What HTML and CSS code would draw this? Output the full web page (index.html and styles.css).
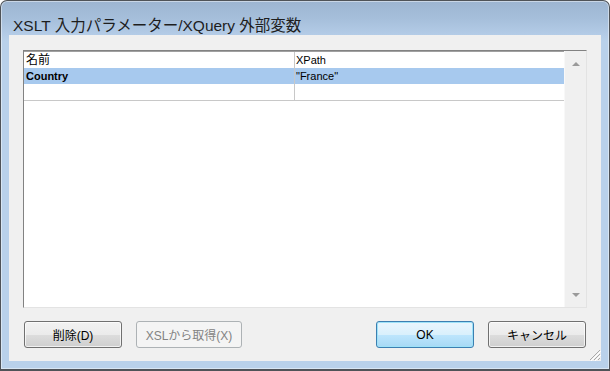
FILE: index.html
```html
<!DOCTYPE html>
<html lang="ja">
  <head>
    <meta charset="UTF-8" />
    <title>XSLT 入力パラメーター/XQuery 外部変数</title>
    <link rel="stylesheet" href="styles.css">
  </head>
  <body>
    <div class="window">
      <div class="title-bar">XSLT 入力パラメーター/XQuery 外部変数</div>
      <div class="client">
        <div class="list-box">
          <div class="grid">
            <div class="row header">
              <div class="cell name">名前</div>
              <div class="cell value">XPath</div>
            </div>
            <div class="row selected">
              <div class="cell name bold">Country</div>
              <div class="cell value">"France"</div>
            </div>
            <div class="row empty">
              <div class="cell name"></div>
              <div class="cell value"></div>
            </div>
          </div>
          <div class="scrollbar">
            <span class="arrow up"></span>
            <span class="arrow down"></span>
          </div>
        </div>
        <div class="buttons">
          <button class="btn btn-delete">削除(D)</button>
          <button class="btn btn-xsl" disabled>XSLから取得(X)</button>
          <div class="spacer"></div>
          <button class="btn btn-ok">OK</button>
          <button class="btn btn-cancel">キャンセル</button>
        </div>
        <svg class="grip" width="12" height="12" viewBox="0 0 12 12">
          <!-- resize grip -->
          <line x1="11" y1="1" x2="1" y2="11" stroke="#a8a8a8" />
          <line x1="12" y1="2" x2="2" y2="12" stroke="#ffffff" />
          <line x1="11" y1="5" x2="5" y2="11" stroke="#a8a8a8" />
          <line x1="12" y1="6" x2="6" y2="12" stroke="#ffffff" />
          <line x1="11" y1="9" x2="9" y2="11" stroke="#a8a8a8" />
        </svg>
      </div>
    </div>
  </body>
</html>
```

FILE: styles.css
```css
body {
  margin: 0;
  font-family: "Liberation Sans", "Noto Sans CJK JP", sans-serif;
  background-color: #ffffff;
}
.window {
  width: 610px;
  height: 371px;
  box-sizing: border-box;
  border: 1px solid #4f5358;
  border-bottom-width: 2px;
  border-radius: 7px 7px 0 0;
  background: linear-gradient(to bottom, #9db5d1 0, #a6bfdb 18px, #b4cce7 34px, #b9d1ea 40px, #b9d1ea 100%);
  box-shadow: inset 0 0 0 1px rgba(255, 255, 255, 0.45);
  padding: 0 8px 8px 8px;
  display: flex;
  flex-direction: column;
}
.title-bar {
  height: 35px;
  box-sizing: border-box;
  padding: 12px 0 0 4px;
  font-size: 15.5px;
  color: #1e1e1e;
  white-space: nowrap;
}
.client {
  position: relative;
  flex: 1;
  background-color: #f0f0f0;
  padding: 15px 14px 13px 14px;
  display: flex;
  flex-direction: column;
}
.list-box {
  height: 258px;
  box-sizing: border-box;
  background: white;
  border: 1px solid;
  border-color: #828282 #e3e3e3 #e3e3e3 #828282;
  box-shadow: inset 0 1px 0 #a0a0a0;
  display: flex;
}
.grid {
  flex: 1;
  padding-top: 1px;
}
.row {
  display: flex;
  height: 16px;
}
.row.selected {
  background-color: #a7c9ee;
}
.row.empty {
  border-bottom: 1px solid #c8c8c8;
}
.cell {
  font-size: 11px;
  line-height: 16px;
  color: #000;
  padding-left: 2px;
  box-sizing: border-box;
  white-space: nowrap;
}
.cell.name {
  width: 271px;
  border-right: 1px solid #c8c8c8;
}
.cell.value {
  flex: 1;
  padding-left: 1px;
}
.header .cell.name {
  font-size: 12px;
}
.bold {
  font-weight: bold;
}
.scrollbar {
  width: 21px;
  background-color: #f0f0f0;
  border-left: 1px solid #f8f8f8;
  display: flex;
  flex-direction: column;
  justify-content: space-between;
  align-items: center;
  padding: 11px 0 10px 0;
}
.arrow {
  width: 0;
  height: 0;
  border-left: 4px solid transparent;
  border-right: 4px solid transparent;
}
.arrow.up {
  border-bottom: 4px solid #9a9a9a;
}
.arrow.down {
  border-top: 4px solid #9a9a9a;
}
.buttons {
  display: flex;
  margin-top: 13px;
  padding: 0 1px;
  gap: 14px;
}
.spacer {
  flex: 1;
}
.btn {
  height: 27px;
  border: 1px solid #707070;
  border-radius: 3px;
  background: linear-gradient(to bottom, #f2f2f2 0, #ebebeb 50%, #dddddd 50%, #cfcfcf 100%);
  box-shadow: inset 0 0 0 1px rgba(255, 255, 255, 0.7);
  font-family: "Liberation Sans", "Noto Sans CJK JP", sans-serif;
  font-size: 12px;
  color: #000;
  padding: 0;
}
.btn-delete {
  width: 98px;
}
.btn-xsl {
  width: 106px;
  border-color: #adb2b5;
  background: #f4f4f4;
  color: #838383;
  box-shadow: none;
}
.btn-ok {
  width: 98px;
  border-color: #3c7fb1;
  background: linear-gradient(to bottom, #eaf6fd 0, #d9f0fc 50%, #bee6fd 50%, #a7d9f5 100%);
  box-shadow: inset 0 0 0 1px #9ee2f8;
}
.btn-cancel {
  width: 98px;
}
.grip {
  position: absolute;
  right: 0;
  bottom: 0;
}
```
